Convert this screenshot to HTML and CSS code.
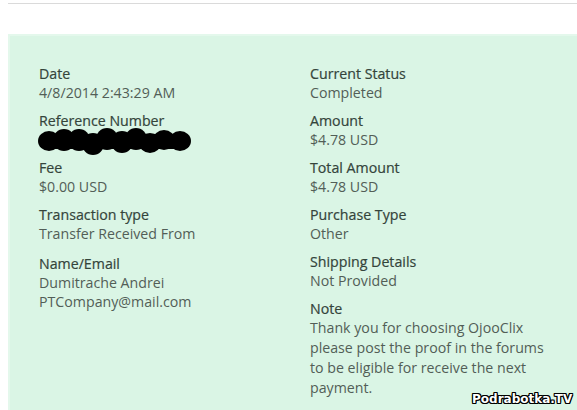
FILE: index.html
```html
<!DOCTYPE html>
<html>
<head>
<meta charset="utf-8">
<link rel="stylesheet" href="styles.css">
</head>
<body>
<div class="page">
  <div class="rule"></div>
  <div class="panel">
    <div class="col">
      <div class="field"><div class="label">Date</div><div class="value">4/8/2014 2:43:29 AM</div></div>
      <div class="field"><div class="label">Reference Number</div>
        <div class="value redacted">
          <svg width="160" height="30" viewBox="0 0 160 30">
            <g fill="#000">
              <ellipse cx="12" cy="14" rx="11" ry="10"/>
              <ellipse cx="27" cy="13" rx="11" ry="11"/>
              <ellipse cx="42" cy="13" rx="11" ry="11"/>
              <ellipse cx="56" cy="17" rx="11" ry="11"/>
              <ellipse cx="70" cy="12" rx="11" ry="11"/>
              <ellipse cx="85" cy="15" rx="11" ry="11"/>
              <ellipse cx="99" cy="12" rx="11" ry="11"/>
              <ellipse cx="113" cy="16" rx="11" ry="10"/>
              <ellipse cx="127" cy="13" rx="11" ry="10"/>
              <ellipse cx="143" cy="14" rx="11" ry="10"/>
              <rect x="10" y="7" width="135" height="15"/>
            </g>
          </svg>
        </div>
      </div>
      <div class="field"><div class="label">Fee</div><div class="value">$0.00 USD</div></div>
      <div class="field field-wide"><div class="label">Transaction type</div><div class="value">Transfer Received From</div></div>
      <div class="field"><div class="label">Name/Email</div><div class="value">Dumitrache Andrei<br>PTCompany@mail.com</div></div>
    </div>
    <div class="col">
      <div class="field"><div class="label">Current Status</div><div class="value">Completed</div></div>
      <div class="field"><div class="label">Amount</div><div class="value">$4.78 USD</div></div>
      <div class="field"><div class="label">Total Amount</div><div class="value">$4.78 USD</div></div>
      <div class="field"><div class="label">Purchase Type</div><div class="value">Other</div></div>
      <div class="field"><div class="label">Shipping Details</div><div class="value">Not Provided</div></div>
      <div class="field"><div class="label">Note</div><div class="value note">Thank you for choosing OjooClix please post the proof in the forums to be eligible for receive the next payment.</div></div>
    </div>
  </div>
  <div class="watermark">Podrabotka.TV</div>
</div>
</body>
</html>
```
FILE: styles.css
```css
html, body {
  margin: 0;
  padding: 0;
  background: #fff;
  overflow: hidden;
}
.page {
  padding: 3px 0 0 8px;
  font-family: "Open Sans", "Noto Sans", sans-serif;
  font-size: 14.2px;
  line-height: 19px;
  width: 640px;
}
.rule {
  height: 1px;
  background: #dadada;
  margin-bottom: 30px;
}
.panel {
  background: #daf5e5;
  border: 2px solid #e4f8ec;
  border-right: none;
  padding: 28px 0 20px 29px;
  display: grid;
  grid-template-columns: 271px 1fr;
}
.field {
  margin-bottom: 9px;
}
.field-wide {
  margin-bottom: 11px;
}
.label {
  color: #34443b;
  -webkit-text-stroke: 0.2px #34443b;
}
.value {
  color: #525e57;
}
.redacted {
  height: 19px;
  position: relative;
}
.redacted svg {
  position: absolute;
  left: -2px;
  top: -3px;
}
.note {
  width: 250px;
  line-height: 20px;
}
.watermark {
  position: absolute;
  left: 472px;
  top: 390px;
  font-family: "DejaVu Sans", sans-serif;
  font-weight: bold;
  font-size: 12px;
  color: #fff;
  text-shadow: 1px 0 #000, -1px 0 #000, 0 1px #000, 0 -1px #000, 1px 1px #000, -1px -1px #000, 1px -1px #000, -1px 1px #000;
}
```
